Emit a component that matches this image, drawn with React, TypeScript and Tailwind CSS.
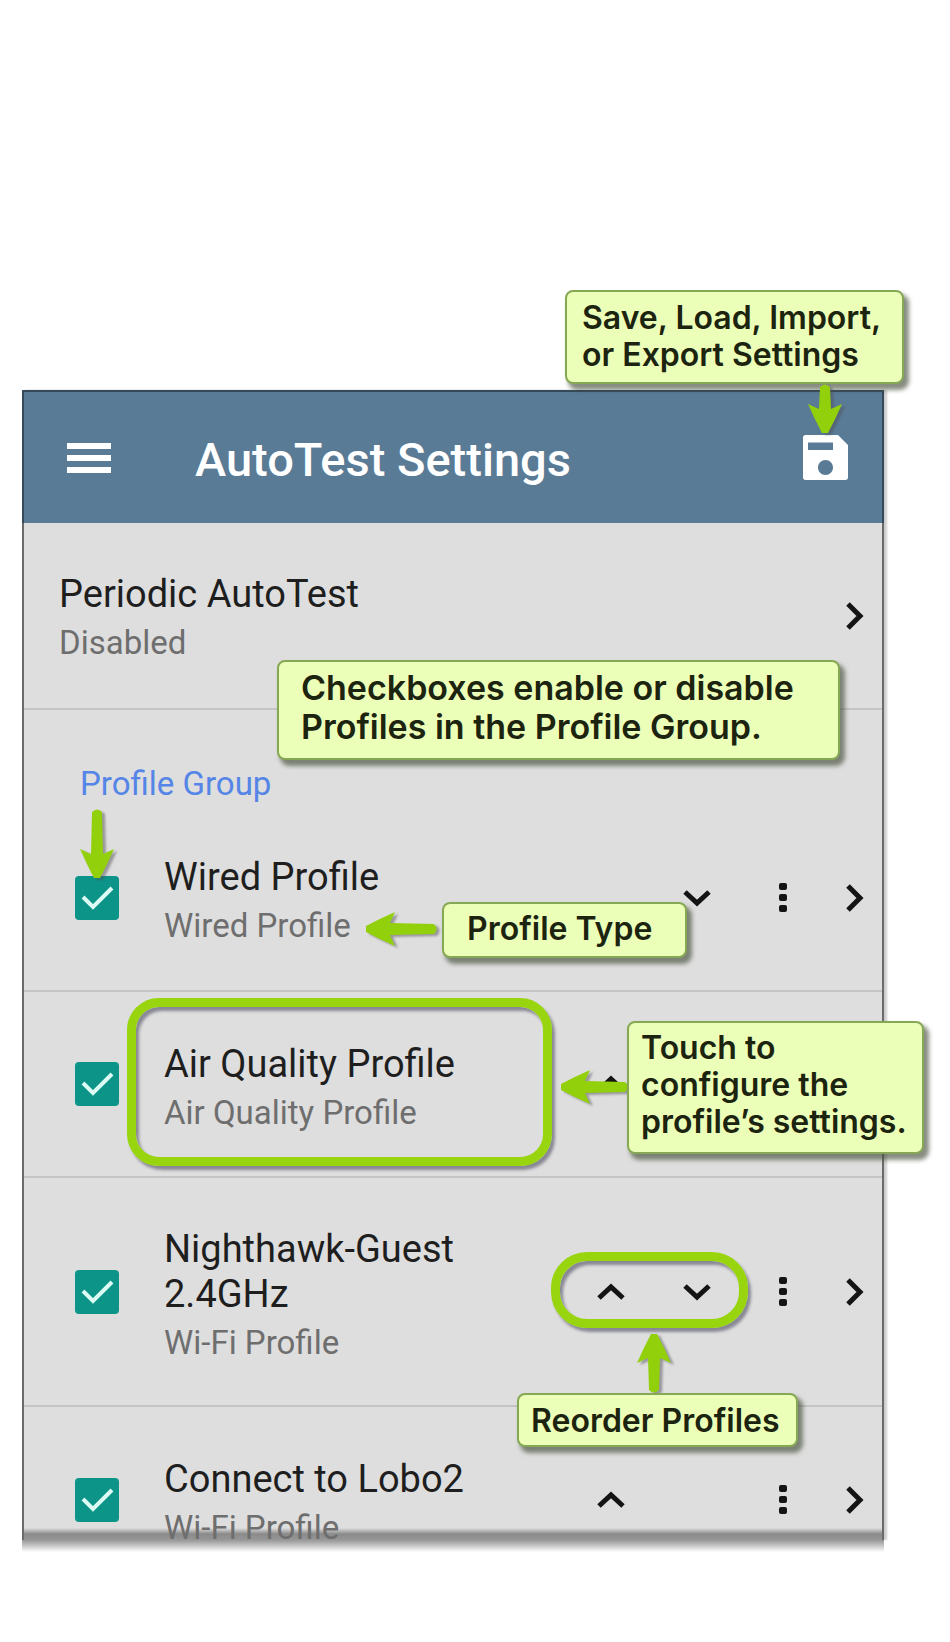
import type { ReactNode } from "react";

type Direction = "up" | "down" | "left";

const CHEVRONS = {
  up: "M3 17 L15 6 L27 17",
  down: "M3 5 L15 16 L27 5",
};

function VerticalChevron({ direction }: { direction: "up" | "down" }) {
  return (
    <svg viewBox="0 0 30 22" className="h-[22px] w-[30px]" fill="none" stroke="#141414" strokeWidth="5" aria-hidden="true">
      <path d={CHEVRONS[direction]} />
    </svg>
  );
}

function ChevronRight() {
  return (
    <svg viewBox="0 0 18 30" className="h-[30px] w-[18px]" fill="none" stroke="#141414" strokeWidth="5" aria-hidden="true">
      <path d="M2 3 L14 15 L2 27" />
    </svg>
  );
}

function Dots() {
  return (
    <svg viewBox="0 0 8 30" className="h-[30px] w-2" fill="#141414" aria-hidden="true">
      <rect x="0" y="0" width="8" height="7" rx="2" />
      <rect x="0" y="11" width="8" height="7" rx="2" />
      <rect x="0" y="22" width="8" height="7" rx="2" />
    </svg>
  );
}

function Callout({ className, children }: { className: string; children: ReactNode }) {
  return (
    <div
      className={`absolute z-20 whitespace-nowrap rounded-lg border-2 border-[#86a855] bg-[#ecffb8] font-['Inter',sans-serif] font-semibold text-[#1c2410] shadow-[4px_5px_4px_1px_rgba(70,80,60,0.65)] ${className}`}
    >
      {children}
    </div>
  );
}

/* The arrow is drawn pointing down and turned to its direction. */
function Arrow({ direction, length, className }: { direction: Direction; length: number; className: string }) {
  const turn = direction === "down" ? 0 : direction === "left" ? 90 : 180;
  const wide = direction === "left";
  const w = wide ? length : 40;
  const h = wide ? 40 : length;
  return (
    <svg
      width={w}
      height={h}
      viewBox={`${-w / 2} ${-h / 2} ${w} ${h}`}
      className={`absolute z-20 overflow-visible drop-shadow-[3px_2px_1px_rgba(80,80,90,0.5)] ${className}`}
      aria-hidden="true"
    >
      <g transform={`rotate(${turn})`}>
        <path
          d={`M-5 ${-length / 2 + 3} Q0 ${-length / 2 - 2} 5 ${-length / 2 + 3} L6 ${length / 2 - 25} L17 ${length / 2 - 30} Q10 ${length / 2 - 14} 3 ${length / 2 - 1} L-3 ${length / 2 - 1} Q-10 ${length / 2 - 14} -17 ${length / 2 - 30} L-6 ${length / 2 - 25} Z`}
          fill="#93d00c"
        />
      </g>
    </svg>
  );
}

function Highlight({ className }: { className: string }) {
  return (
    <div
      className={`pointer-events-none absolute z-10 border-[9px] border-[#98d50f] shadow-[3px_4px_3px_rgba(80,80,100,0.6),inset_3px_4px_3px_rgba(80,80,100,0.6)] ${className}`}
    />
  );
}

function ProfileRow({
  id,
  title,
  type,
  up,
  down,
  className,
  children,
}: {
  id: string;
  title: string;
  type: string;
  up?: boolean;
  down?: boolean;
  className: string;
  children?: ReactNode;
}) {
  return (
    <li className={`relative flex items-center pl-[51px] ${className}`}>
      <span className="relative flex size-11 shrink-0">
        <input
          id={id}
          type="checkbox"
          defaultChecked
          className="size-11 appearance-none rounded bg-[#0c9488]"
        />
        <svg viewBox="0 0 44 44" className="pointer-events-none absolute inset-0 size-11" fill="none" stroke="#dcfbf5" strokeWidth="4" aria-hidden="true">
          <path d="M8 21 L18 31 L37 12" />
        </svg>
      </span>
      <label htmlFor={id} className="ml-[45px] flex-1 pr-8 pt-3">
        <span className="block text-[38px] leading-[45px] text-[#1e1e1e]">{title}</span>
        <span className="block text-[33px] leading-[52px] text-[#6e6e6e]">{type}</span>
      </label>
      <div className="-mr-0.5 flex shrink-0">
        <span className="flex w-[86px] justify-center">
          {up && (
            <button type="button" aria-label={`Move ${title} up`} className="p-2">
              <VerticalChevron direction="up" />
            </button>
          )}
        </span>
        <span className="flex w-[86px] justify-center">
          {down && (
            <button type="button" aria-label={`Move ${title} down`} className="p-2">
              <VerticalChevron direction="down" />
            </button>
          )}
        </span>
        <button type="button" aria-label={`${title} options`} className="flex w-[86px] items-center justify-center">
          <Dots />
        </button>
        <button type="button" aria-label={`Open ${title}`} className="flex w-[58px] items-center justify-center">
          <ChevronRight />
        </button>
      </div>
      {children}
    </li>
  );
}

export default function App() {
  return (
    <main className="min-h-screen bg-white pb-[90px] pl-[22px] pr-[66px] pt-[390px] font-['Roboto',sans-serif]">
      <div className="relative">
        <div className="border-x-2 border-[#6b6b6b] bg-[#dedede] shadow-[3px_0_2px_rgba(0,0,0,0.2)]">
          <header className="relative -mx-0.5 flex h-[133px] items-center border-x-2 border-t-2 border-[#35495b] bg-[#5a7b96] pl-[43px] pr-[34px]">
            <button type="button" aria-label="Menu" className="flex flex-col gap-[6px]">
              <span className="h-[6px] w-[44px] bg-white" />
              <span className="h-[6px] w-[44px] bg-white" />
              <span className="h-[6px] w-[44px] bg-white" />
            </button>
            <h1 className="ml-[84px] flex-1 pt-1 text-[47px] font-medium leading-[56px] text-white">AutoTest Settings</h1>
            <button type="button" aria-label="Save settings">
              <svg viewBox="3 3 18 18" className="size-[45px]" fill="#fff" aria-hidden="true">
                <path d="M17 3H4c-.6 0-1 .4-1 1v16c0 .6.4 1 1 1h16c.6 0 1-.4 1-1V7l-4-4zm-5 16c-1.66 0-3-1.34-3-3s1.34-3 3-3 3 1.34 3 3-1.34 3-3 3zm3-10H5V6h10v3z" />
              </svg>
            </button>
            <Callout className="-right-[22px] -top-[102px] w-[339px] px-[15px] pb-[9px] pt-[7px] text-[32px] leading-[37px]">
              Save, Load, Import,
              <br />
              or Export Settings
            </Callout>
            <Arrow direction="down" length={50} className="-top-2 right-[37px]" />
          </header>

          <section className="relative flex h-[187px] items-center border-b-2 border-[#c4c4c4] pl-[35px]">
            <div className="flex-1 pt-[10px]">
              <h2 className="text-[38px] leading-[45px] text-[#1e1e1e]">Periodic AutoTest</h2>
              <p className="text-[33px] leading-[52px] text-[#6e6e6e]">Disabled</p>
            </div>
            <button type="button" aria-label="Open Periodic AutoTest" className="-mr-0.5 flex w-[58px] items-center justify-center">
              <ChevronRight />
            </button>
            <Callout className="-bottom-[52px] right-[42px] w-[563px] px-[22px] pb-3 pt-[6px] text-[34px] leading-[39px]">
              Checkboxes enable or disable
              <br />
              Profiles in the Profile Group.
            </Callout>
          </section>

          <section className="relative">
            <h2 className="h-[95px] pl-[56px] pt-[52px] text-[33px] leading-[43px] text-[#5585e6]">Profile Group</h2>
            <Arrow direction="down" length={70} className="left-[53px] top-[99px]" />
            <ul>
              <ProfileRow id="wired" title="Wired Profile" type="Wired Profile" down className="h-[187px] border-b-2 border-[#c4c4c4]">
                <Arrow direction="left" length={72} className="left-[341px] top-[104px]" />
                <Callout className="left-[418px] top-[97px] w-[245px] px-[23px] pb-1 pt-0.5 text-[32px] leading-[46px]">Profile Type</Callout>
              </ProfileRow>
              <ProfileRow id="air" title="Air Quality Profile" type="Air Quality Profile" up className="h-[186px] border-b-2 border-[#c4c4c4]">
                <Highlight className="bottom-[10px] left-[103px] top-[6px] w-[425px] rounded-[32px]" />
                <Arrow direction="left" length={68} className="right-[254px] top-[75px]" />
                <Callout className="-right-[42px] top-[29px] w-[297px] px-3 pb-3 pt-[6px] text-[32px] leading-[37px]">
                  Touch to
                  <br />
                  configure the
                  <br />
                  profile’s settings.
                </Callout>
              </ProfileRow>
              <ProfileRow id="nighthawk" title="Nighthawk-Guest 2.4GHz" type="Wi-Fi Profile" up down className="h-[229px] border-b-2 border-[#c4c4c4]">
                <Highlight className="right-[134px] top-[74px] h-[76px] w-[197px] rounded-[36px]" />
                <Arrow direction="up" length={60} className="bottom-[12px] right-[208px]" />
                <Callout className="-bottom-[42px] right-[84px] w-[281px] px-3 pb-px pt-[3px] text-[32px] leading-[46px]">Reorder Profiles</Callout>
              </ProfileRow>
              <ProfileRow
                id="lobo"
                title="Connect to Lobo2"
                type="Wi-Fi Profile"
                up
                className="h-[133px] bg-[linear-gradient(to_bottom,#dedede_0_121px,#8a8a8a_127px,#979797_133px)] pt-[52px]"
              />
            </ul>
          </section>
        </div>
        <div className="h-3 bg-linear-to-b from-[#979797] to-white" />
      </div>
    </main>
  );
}
